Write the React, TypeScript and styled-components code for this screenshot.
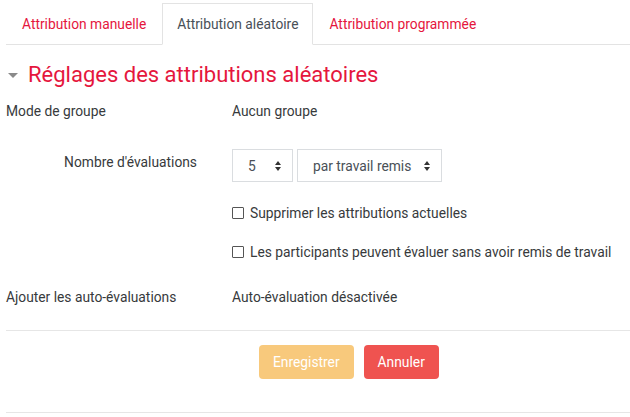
import React from 'react';
import styled, { createGlobalStyle } from 'styled-components';

const GlobalStyle = createGlobalStyle`
  html, body {
    margin: 0;
    padding: 0;
    background: #fff;
  }
  body {
    font-family: Roboto, "Liberation Sans", sans-serif;
    font-size: 13.8px;
    color: #373a3c;
  }
`;

const Page = styled.div`
  width: 630px;
  height: 417px;
  padding-left: 6px;
  box-sizing: border-box;
  overflow: hidden;
`;

const TabBar = styled.ul`
  display: flex;
  list-style: none;
  margin: 3px 0 0;
  padding: 0;
  border-bottom: 1px solid #e3e3e3;
`;

const Tab = styled.li<{ $active?: boolean }>`
  height: 40px;
  display: flex;
  align-items: center;
  padding: 0 15px 0 15px;
  margin-bottom: ${(p) => (p.$active ? '-1px' : '0')};
  height: ${(p) => (p.$active ? '40px' : '41px')};
  border: ${(p) => (p.$active ? '1px solid #e3e3e3' : '0')};
  border-bottom-color: #fff;
  padding-left: ${(p) => (p.$active ? '14px' : '16px')};
  padding-right: ${(p) => (p.$active ? '14px' : '16px')};
  background: ${(p) => (p.$active ? '#fff' : 'transparent')};
  color: ${(p) => (p.$active ? '#495057' : '#e5163d')};
`;

const Heading = styled.h3`
  display: flex;
  align-items: center;
  gap: 10px;
  margin: 16px 0 0;
  padding-left: 2px;
  font-size: 22px;
  font-weight: 400;
  color: #e5163d;
  line-height: 28px;
`;

const Caret = styled.span`
  width: 0;
  height: 0;
  border-left: 5px solid transparent;
  border-right: 5px solid transparent;
  border-top: 5px solid #8a8a8a;
`;

const Row = styled.div<{ $h: number; $gap?: number }>`
  display: grid;
  grid-template-columns: 226px 1fr;
  align-items: center;
  height: ${(p) => p.$h}px;
  margin-top: ${(p) => p.$gap ?? 0}px;
`;

const Label = styled.div<{ $right?: boolean }>`
  text-align: ${(p) => (p.$right ? 'right' : 'left')};
  padding-right: ${(p) => (p.$right ? '35px' : '0')};
  align-self: ${(p) => (p.$right ? 'start' : 'center')};
  padding-top: ${(p) => (p.$right ? '3px' : '0')};
  line-height: 20px;
`;

const Controls = styled.div`
  display: flex;
  gap: 4px;
  align-self: start;
`;

const Select = styled.div<{ $w: number }>`
  width: ${(p) => p.$w}px;
  height: 33px;
  box-sizing: border-box;
  border: 1px solid #dadde0;
  display: flex;
  align-items: center;
  justify-content: space-between;
  padding: 0 11px 0 15px;
  color: #495057;
`;

const Arrows = styled.span`
  display: flex;
  flex-direction: column;
  gap: 2px;
  &::before,
  &::after {
    content: '';
    width: 0;
    height: 0;
    border-left: 3.5px solid transparent;
    border-right: 3.5px solid transparent;
  }
  &::before {
    border-bottom: 4px solid #333;
  }
  &::after {
    border-top: 4px solid #333;
  }
`;

const Check = styled.label`
  display: flex;
  align-items: center;
  gap: 6px;
`;

const Box = styled.span`
  width: 12px;
  height: 12px;
  box-sizing: border-box;
  border: 1px solid #555;
  border-radius: 1px;
  background: #fff;
`;

const Divider = styled.hr<{ $gap?: number }>`
  border: 0;
  border-top: 1px solid #e6e6e6;
  margin: ${(p) => p.$gap ?? 0}px 0 0;
`;

const Actions = styled.div`
  display: flex;
  gap: 10px;
  padding: 14px 0 0 253px;
  height: 81px;
  box-sizing: border-box;
`;

const Button = styled.button<{ $kind: 'save' | 'cancel' }>`
  height: 34px;
  padding: 0 14px;
  border: 0;
  border-radius: 4px;
  font-family: Roboto, "Liberation Sans", sans-serif;
  font-size: 13.8px;
  color: #fff;
  background: ${(p) => (p.$kind === 'save' ? '#f8c97c' : '#ef5350')};
`;

const App: React.FC = () => {
  return (
    <Page>
      <GlobalStyle />
      <TabBar>
        <Tab>Attribution manuelle</Tab>
        <Tab $active>Attribution aléatoire</Tab>
        <Tab>Attribution programmée</Tab>
      </TabBar>

      <Heading>
        <Caret />
        Réglages des attributions aléatoires
      </Heading>

      <Row $h={44}>
        <Label>Mode de groupe</Label>
        <div>Aucun groupe</div>
      </Row>

      <Row $h={33} $gap={16}>
        <Label $right>Nombre d'évaluations</Label>
        <Controls>
          <Select $w={61}>
            5 <Arrows />
          </Select>
          <Select $w={145}>
            par travail remis <Arrows />
          </Select>
        </Controls>
      </Row>

      <Row $h={40} $gap={11}>
        <div />
        <Check>
          <Box />
          Supprimer les attributions actuelles
        </Check>
      </Row>

      <Row $h={38}>
        <div />
        <Check>
          <Box />
          Les participants peuvent évaluer sans avoir remis de travail
        </Check>
      </Row>

      <Row $h={52}>
        <Label>Ajouter les auto-évaluations</Label>
        <div>Auto-évaluation désactivée</div>
      </Row>

      <Divider $gap={7} />
      <Actions>
        <Button $kind="save">Enregistrer</Button>
        <Button $kind="cancel">Annuler</Button>
      </Actions>
      <Divider />
    </Page>
  );
};

export default App;
